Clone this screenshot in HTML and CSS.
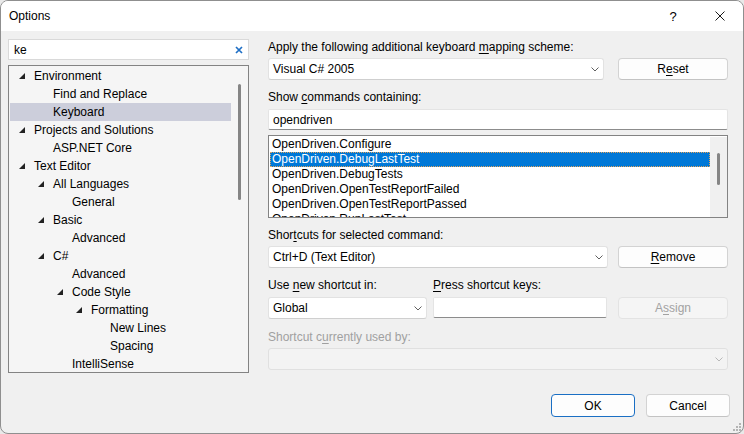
FILE: index.html
```html
<!DOCTYPE html>
<html>
<head>
<meta charset="utf-8">
<title>Options</title>
<link rel="stylesheet" href="styles.css">
</head>
<body>
<div class="window">
  <div class="titlebar">
    <span class="title">Options</span>
    <span class="help">?</span>
    <span class="close"><svg width="10" height="10" viewBox="0 0 10 10"><path d="M0.5 0.5L9.5 9.5M9.5 0.5L0.5 9.5" stroke="#1a1a1a" stroke-width="1" fill="none"/></svg></span>
  </div>
  <div class="main">
    <div class="left">
      <div class="search">
        <span class="search-text">ke</span>
        <svg class="clear" width="8" height="8" viewBox="0 0 8 8"><path d="M1 1L7 7M7 1L1 7" stroke="#1f6fc5" stroke-width="1.7" fill="none"/></svg>
      </div>
      <div class="tree">
        <div class="tree-rows">
          <div class="row l0"><span class="twisty open"></span><span>Environment</span></div>
          <div class="row l1"><span class="twisty"></span><span>Find and Replace</span></div>
          <div class="row l1 sel"><span class="twisty"></span><span>Keyboard</span></div>
          <div class="row l0"><span class="twisty open"></span><span>Projects and Solutions</span></div>
          <div class="row l1"><span class="twisty"></span><span>ASP.NET Core</span></div>
          <div class="row l0"><span class="twisty open"></span><span>Text Editor</span></div>
          <div class="row l1"><span class="twisty open"></span><span>All Languages</span></div>
          <div class="row l2"><span class="twisty"></span><span>General</span></div>
          <div class="row l1"><span class="twisty open"></span><span>Basic</span></div>
          <div class="row l2"><span class="twisty"></span><span>Advanced</span></div>
          <div class="row l1"><span class="twisty open"></span><span>C#</span></div>
          <div class="row l2"><span class="twisty"></span><span>Advanced</span></div>
          <div class="row l2"><span class="twisty open"></span><span>Code Style</span></div>
          <div class="row l3"><span class="twisty open"></span><span>Formatting</span></div>
          <div class="row l4"><span class="twisty"></span><span>New Lines</span></div>
          <div class="row l4"><span class="twisty"></span><span>Spacing</span></div>
          <div class="row l2"><span class="twisty"></span><span>IntelliSense</span></div>
        </div>
        <div class="vscroll tree-scroll"><div class="thumb"></div></div>
      </div>
    </div>

    <div class="right">
      <div class="label">Apply the following additional keyboard <u>m</u>apping scheme:</div>
      <div class="line1">
        <div class="combo scheme"><span class="val">Visual C# 2005</span><svg class="chev" width="8" height="5" viewBox="0 0 8 5"><path d="M0.5 0.5L4 4L7.5 0.5" stroke="#606060" fill="none"/></svg></div>
        <div class="btn">R<u>e</u>set</div>
      </div>

      <div class="label gap9">Show <u>c</u>ommands containing:</div>
      <div class="textbox filter">opendriven</div>

      <div class="list">
        <div class="list-items">
          <div class="item">OpenDriven.Configure</div>
          <div class="item sel">OpenDriven.DebugLastTest</div>
          <div class="item">OpenDriven.DebugTests</div>
          <div class="item">OpenDriven.OpenTestReportFailed</div>
          <div class="item">OpenDriven.OpenTestReportPassed</div>
          <div class="item">OpenDriven.RunLastTest</div>
        </div>
        <div class="vscroll list-scroll"><div class="thumb"></div></div>
      </div>

      <div class="label gap9">Shor<u>t</u>cuts for selected command:</div>
      <div class="line3">
        <div class="combo shortcuts"><span class="val">Ctrl+D (Text Editor)</span><svg class="chev" width="8" height="5" viewBox="0 0 8 5"><path d="M0.5 0.5L4 4L7.5 0.5" stroke="#606060" fill="none"/></svg></div>
        <div class="btn"><u>R</u>emove</div>
      </div>

      <div class="grid4">
        <div class="label">Use <u>n</u>ew shortcut in:</div>
        <div class="label"><u>P</u>ress shortcut keys:</div>
        <div></div>
        <div class="combo"><span class="val">Global</span><svg class="chev" width="8" height="5" viewBox="0 0 8 5"><path d="M0.5 0.5L4 4L7.5 0.5" stroke="#606060" fill="none"/></svg></div>
        <div class="textbox keys"></div>
        <div class="btn disabled assign">A<u>s</u>sign</div>
      </div>

      <div class="label disabled gap10">Shortcut c<u>u</u>rrently used by:</div>
      <div class="combo disabled usedby"><span class="val"></span><svg class="chev" width="8" height="5" viewBox="0 0 8 5"><path d="M0.5 0.5L4 4L7.5 0.5" stroke="#b8b8b8" fill="none"/></svg></div>
    </div>
  </div>
  <div class="footer">
    <div class="btn default">OK</div>
    <div class="btn">Cancel</div>
  </div>
  <svg class="grip" width="8" height="8" viewBox="0 0 8 8">
    <rect x="6" y="0" width="2" height="2" fill="#b4b4b4"/>
    <rect x="3" y="3" width="2" height="2" fill="#b4b4b4"/>
    <rect x="6" y="3" width="2" height="2" fill="#b4b4b4"/>
    <rect x="0" y="6" width="2" height="2" fill="#b4b4b4"/>
    <rect x="3" y="6" width="2" height="2" fill="#b4b4b4"/>
    <rect x="6" y="6" width="2" height="2" fill="#b4b4b4"/>
  </svg>
</div>
</body>
</html>
```

FILE: styles.css
```css
* { box-sizing: border-box; }
html, body { margin: 0; padding: 0; }
body {
  width: 744px;
  height: 434px;
  overflow: hidden;
  background: #e9e9e9;
  font-family: "Liberation Sans", Arial, sans-serif;
  font-size: 12px;
  color: #000;
}
u { text-decoration: underline; text-underline-offset: 2px; }

.window {
  position: relative;
  width: 744px;
  height: 434px;
  border: 1px solid #8f8f8f;
  border-radius: 8px;
  background: #f0f0f0;
  display: flex;
  flex-direction: column;
  overflow: hidden;
}

.titlebar {
  flex: none;
  height: 30px;
  background: #fff;
  display: flex;
  align-items: center;
  padding-left: 8px;
}
.title { flex: 1; }
.help {
  width: 8px;
  text-align: center;
  font-size: 13px;
  margin-right: 38px;
}
.close {
  display: flex;
  margin-right: 18px;
}

.main {
  flex: 1;
  display: grid;
  grid-template-columns: 241px 460px;
  column-gap: 19px;
  padding: 8px 0 0 7px;
  align-items: start;
}

/* left column */
.search {
  height: 21px;
  background: #fff;
  border: 1px solid #d9d9d9;
  display: flex;
  align-items: center;
  padding: 0 5px 0 5px;
}
.search-text { flex: 1; }
.clear { display: block; }

.tree {
  margin-top: 5px;
  height: 308px;
  border: 1px solid #838383;
  background: #f5f5f5;
  display: flex;
  padding: 1px 0 0 1px;
}
.tree-rows { flex: 1; overflow: hidden; }
.row {
  height: 18px;
  display: flex;
  align-items: center;
  white-space: nowrap;
}
.row.sel { background: #cccedb; }
.l0 { padding-left: 9px; }
.l1 { padding-left: 28px; }
.l2 { padding-left: 47px; }
.l3 { padding-left: 66px; }
.l4 { padding-left: 85px; }
.twisty {
  flex: none;
  width: 6px;
  height: 6px;
  margin-right: 9px;
}
.twisty.open {
  background: #222;
  clip-path: polygon(100% 0, 100% 100%, 0 100%);
}

.vscroll {
  flex: none;
  width: 17px;
  display: flex;
  justify-content: center;
}
.thumb {
  width: 3px;
  background: #858585;
  border-radius: 2px;
}
.tree-scroll { padding-top: 17px; }
.tree-scroll .thumb { height: 116px; }

/* right column */
.label {
  height: 16px;
  line-height: 16px;
  white-space: nowrap;
}
.label.disabled { color: #a0a0a0; }
.gap9 { margin-top: 9px; }
.gap10 { margin-top: 10px; }

.combo {
  height: 22px;
  background: #fff;
  border: 1px solid #e2e2e2;
  border-bottom-color: #cfcfcf;
  border-radius: 3px;
  display: flex;
  align-items: center;
  padding: 0 4px 0 4px;
}
.combo .val { flex: 1; white-space: nowrap; }
.chev { display: block; flex: none; }
.combo.disabled {
  background: #f3f3f3;
  border-color: #e0e0e0;
}

.textbox {
  height: 21px;
  background: #fff;
  border: 1px solid #e4e4e4;
  border-bottom-color: #8c8c8c;
  border-radius: 2px;
  display: flex;
  align-items: center;
  padding: 0 4px;
}

.btn {
  height: 22px;
  background: #fdfdfd;
  border: 1px solid #d3d3d3;
  border-bottom-color: #c3c3c3;
  border-radius: 4px;
  display: flex;
  align-items: center;
  justify-content: center;
}
.btn.disabled {
  color: #a2a2a2;
  background: #f5f5f5;
  border-color: #e3e3e3;
}

.line1 {
  margin-top: 3px;
  display: grid;
  grid-template-columns: 336px 110px;
  column-gap: 14px;
}
.filter { margin-top: 4px; }

.list {
  margin-top: 5px;
  height: 83px;
  border: 1px solid #838383;
  background: #fff;
  display: flex;
  padding: 1px 0 0 1px;
}
.list-items { flex: 1; overflow: hidden; }
.item {
  height: 15px;
  line-height: 15px;
  padding-left: 2px;
  white-space: nowrap;
}
.item.sel {
  background: #0078d7;
  color: #fff;
  outline: 1px dotted #e2a35a;
  outline-offset: -1px;
}
.list-scroll {
  background: #f0f0f0;
  padding-top: 16px;
}
.list-scroll .thumb { height: 32px; }

.line3 {
  margin-top: 3px;
  display: grid;
  grid-template-columns: 340px 110px;
  column-gap: 10px;
}

.grid4 {
  margin-top: 9px;
  display: grid;
  grid-template-columns: 159px 174px 1fr;
  column-gap: 6px;
  row-gap: 4px;
}
.assign { width: 110px; justify-self: end; }

.usedby { margin-top: 3px; }

.footer {
  flex: none;
  display: flex;
  justify-content: flex-end;
  gap: 11px;
  padding: 0 13px 16px 0;
}
.footer .btn {
  width: 84px;
  height: 23px;
}
.btn.default {
  border-color: #1a6fc4;
  background: #fdfdfd;
}

.grip {
  position: absolute;
  right: 2px;
  bottom: 2px;
}
```
